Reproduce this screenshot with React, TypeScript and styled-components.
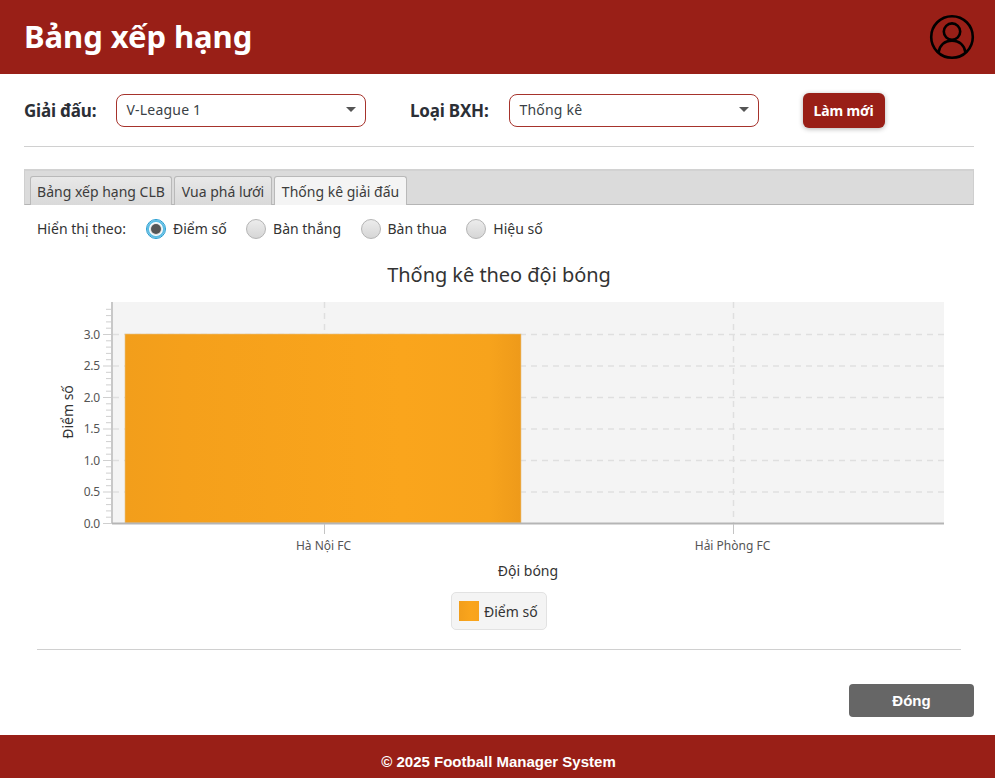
import React from 'react';
import styled, { createGlobalStyle } from 'styled-components';

const FONT = `"Noto Sans", "Open Sans", sans-serif`;

const GlobalStyle = createGlobalStyle`
  html, body {
    margin: 0;
    padding: 0;
    background: #ffffff;
    font-family: ${FONT};
  }
  * {
    box-sizing: border-box;
  }
`;

const Page = styled.div`
  width: 995px;
  height: 778px;
  display: flex;
  flex-direction: column;
  overflow: hidden;
`;

const Header = styled.header`
  height: 74px;
  flex: none;
  background: #991f17;
  display: flex;
  align-items: center;
  justify-content: space-between;
  padding: 0 20px 0 24px;
`;

const Title = styled.h1`
  margin: 0 0 2px;
  font-size: 31px;
  font-weight: 700;
  color: #ffffff;
  letter-spacing: -0.05px;
`;

const Main = styled.main`
  flex: 1;
  display: flex;
  flex-direction: column;
  padding: 19px 21px 18px 24px;
`;

const FilterRow = styled.div`
  display: flex;
  align-items: center;
  height: 35px;
`;

const FilterLabel = styled.label<{ $width: number }>`
  width: ${p => p.$width}px;
  font-size: 17px;
  font-weight: 700;
  color: #2b2f36;
  letter-spacing: -0.2px;
`;

const Select = styled.div`
  width: 250px;
  height: 33px;
  margin-right: 44px;
  padding: 0 9.5px 2px 9.5px;
  display: flex;
  align-items: center;
  justify-content: space-between;
  background: #ffffff;
  border: 1.5px solid #a6332c;
  border-radius: 8px;
  font-size: 14px;
  color: #3a3f46;
  letter-spacing: 0.2px;
`;

const Caret = styled.span`
  width: 0;
  height: 0;
  border-left: 5.5px solid transparent;
  border-right: 5.5px solid transparent;
  border-top: 5.5px solid #555555;
`;

const RefreshButton = styled.button`
  width: 82px;
  height: 35px;
  padding: 0 1px 0 0;
  border: none;
  border-radius: 6px;
  background: #991f17;
  color: #ffffff;
  font-family: ${FONT};
  font-size: 14px;
  font-weight: 700;
  letter-spacing: -0.1px;
  box-shadow: 0 1px 5px rgba(0, 0, 0, 0.3);
`;

const Rule = styled.hr<{ $top: number; $inset?: number }>`
  height: 1px;
  flex: none;
  border: none;
  background: #d0d0d0;
  margin: ${p => p.$top}px ${p => p.$inset ?? 0}px 0;
`;

const TabHeader = styled.div`
  margin-top: 22px;
  height: 36px;
  flex: none;
  display: flex;
  align-items: flex-end;
  gap: 2px;
  padding-left: 5px;
  background: #dbdbdb;
  border-top: 2px solid #d2d2d2;
  border-left: 1px solid #cfcfcf;
  border-right: 1px solid #cfcfcf;
  border-bottom: 1px solid #b5b5b5;
`;

const Tab = styled.div<{ $active?: boolean; $width: number }>`
  width: ${p => p.$width}px;
  height: 29px;
  margin-bottom: -1px;
  display: flex;
  align-items: center;
  justify-content: center;
  border: 1px solid #b9b9b9;
  border-bottom: none;
  border-radius: 3px 3px 0 0;
  background: ${p => (p.$active ? '#f4f4f4' : 'linear-gradient(#e8e8e8, #d9d9d9)')};
  font-size: 14px;
  color: #3c3c3c;
`;

const Pane = styled.section`
  flex: 1;
  display: flex;
  flex-direction: column;
  padding: 0 13px;
`;

const RadioRow = styled.div`
  height: 47px;
  flex: none;
  display: flex;
  align-items: center;
  font-size: 14px;
  color: #333333;
`;

const RadioCaption = styled.span`
  width: 109px;
`;

const RadioItem = styled.label`
  display: flex;
  align-items: center;
  gap: 7px;
  margin-right: 19.4px;
`;

const RadioDot = styled.span<{ $checked?: boolean }>`
  width: 20px;
  height: 20px;
  flex: none;
  display: flex;
  align-items: center;
  justify-content: center;
  border-radius: 50%;
  border: 1px solid #b4b4b4;
  background: linear-gradient(#ececec, #d6d6d6);
  ${p => p.$checked && 'border: 1px solid #1f9bd1; box-shadow: inset 0 0 0 2px #5cbde4, inset 0 0 0 3px #ffffff;'}

  &::after {
    content: '';
    width: 10px;
    height: 10px;
    border-radius: 50%;
    background: ${p => (p.$checked ? '#555555' : 'transparent')};
  }
`;

const ChartTitle = styled.h2`
  margin: 8px 0 0;
  height: 32px;
  font-size: 20px;
  line-height: 30px;
  font-weight: 400;
  text-align: center;
  color: #333333;
  letter-spacing: -0.05px;
`;

const ChartSvg = styled.svg`
  display: block;
  flex: none;
  margin-top: 3px;
`;

const Legend = styled.div`
  align-self: center;
  margin: 7px 0 0;
  width: 96px;
  height: 38px;
  flex: none;
  display: flex;
  align-items: center;
  gap: 5px;
  padding-left: 7px;
  background: #f4f4f4;
  border: 1px solid #e2e2e2;
  border-radius: 5px;
  font-size: 14px;
  color: #333333;
`;

const LegendSwatch = styled.span`
  width: 20px;
  height: 20px;
  flex: none;
  background: linear-gradient(90deg, #f29e1b, #faa51c 60%, #f8a31c);
`;

const ActionRow = styled.div`
  flex: 1;
  display: flex;
  align-items: flex-end;
  justify-content: flex-end;
  margin-right: -13px;
`;

const CloseButton = styled.button`
  width: 125px;
  height: 33px;
  padding: 0;
  border: none;
  border-radius: 4px;
  background: #666666;
  color: #ffffff;
  font-family: "Liberation Sans", Arial, sans-serif;
  font-size: 15px;
  font-weight: 700;
`;

const Footer = styled.footer`
  height: 43px;
  flex: none;
  display: flex;
  align-items: center;
  justify-content: center;
  padding: 10px 0 0 2px;
  background: #991f17;
  color: #ffffff;
  font-family: "Liberation Sans", Arial, sans-serif;
  font-size: 15px;
  font-weight: 700;
`;

const UserIcon = () => (
  <svg width="46" height="46" viewBox="0 0 46 46" fill="none" stroke="#000000" strokeWidth="2.6">
    <circle cx="23" cy="23" r="20.8" />
    <circle cx="23" cy="17.6" r="8.2" />
    <path d="M9.6 38.4 C10.4 31.4 15.6 26.6 23 26.6 C30.4 26.6 35.6 31.4 36.4 38.4" />
  </svg>
);

// chart origin inside the svg: page x - 37, page y - 295
const PLOT = { left: 76, right: 907, top: 7, bottom: 228 };
const UNIT = 63;
const MAJOR = [0, 0.5, 1, 1.5, 2, 2.5, 3];
const MINOR = Array.from({ length: 36 }, (_, i) => i * 0.1).filter(v => Math.round(v * 10) % 5 !== 0);
const CLUBS = [
  { name: 'Hà Nội FC', x: 287 },
  { name: 'Hải Phòng FC', x: 696 },
];

const yFor = (value: number) => PLOT.bottom - value * UNIT;

const Chart = () => (
  <ChartSvg width="924" height="290" viewBox="0 0 924 290" fontFamily={FONT}>
    <defs>
      <linearGradient id="bar" x1="0" x2="1" y1="0" y2="0">
        <stop offset="0" stopColor="#f29e1b" />
        <stop offset="0.15" stopColor="#f5a01b" />
        <stop offset="0.7" stopColor="#faa51c" />
        <stop offset="0.92" stopColor="#f7a31c" />
        <stop offset="1" stopColor="#ee9a1a" />
      </linearGradient>
    </defs>
    <rect x={PLOT.left} y={PLOT.top} width={PLOT.right - PLOT.left} height={PLOT.bottom - PLOT.top} fill="#f4f4f4" />
    {MAJOR.slice(1).map(v => (
      <line key={v} x1={PLOT.left} x2={PLOT.right} y1={yFor(v) + 0.5} y2={yFor(v) + 0.5} stroke="#dfdfdf" strokeWidth="1.5" strokeDasharray="6 5" />
    ))}
    {CLUBS.map(c => (
      <line key={c.name} x1={c.x + 0.5} x2={c.x + 0.5} y1={PLOT.top} y2={PLOT.bottom} stroke="#dfdfdf" strokeWidth="1.5" strokeDasharray="6 5" />
    ))}
    <rect x="88" y={yFor(3)} width="396" height={3 * UNIT} fill="url(#bar)" stroke="#e3c48c" strokeWidth="0.6" />
    {MINOR.map(v => (
      <line key={v} x1="69" x2="75" y1={yFor(v) + 0.5} y2={yFor(v) + 0.5} stroke="#cfcfcf" />
    ))}
    {MAJOR.map(v => (
      <g key={v}>
        <line x1="66" x2="75" y1={yFor(v) + 0.5} y2={yFor(v) + 0.5} stroke="#cfcfcf" />
        <text x="63" y={yFor(v) + 4.5} textAnchor="end" fontSize="12" letterSpacing="-0.2" fill="#555555">
          {v.toFixed(1)}
        </text>
      </g>
    ))}
    <line x1="75" x2="75" y1={PLOT.top} y2={PLOT.bottom} stroke="#c8c8c8" strokeWidth="2" />
    <line x1="75" x2={PLOT.right} y1={PLOT.bottom + 0.5} y2={PLOT.bottom + 0.5} stroke="#b5b5b5" strokeWidth="2" />
    {CLUBS.map(c => (
      <g key={c.name}>
        <line x1={c.x + 0.5} x2={c.x + 0.5} y1={PLOT.bottom + 1} y2={PLOT.bottom + 11} stroke="#c4c4c4" />
        <text x={c.x - 0.5} y="255" textAnchor="middle" fontSize="12" fill="#555555">
          {c.name}
        </text>
      </g>
    ))}
    <text x="491" y="281" textAnchor="middle" fontSize="14" fill="#333333">
      Đội bóng
    </text>
    <text transform="translate(36 117) rotate(-90)" textAnchor="middle" fontSize="14" fill="#333333">
      Điểm số
    </text>
  </ChartSvg>
);

const App: React.FC = () => {
  return (
    <Page>
      <GlobalStyle />
      <Header>
        <Title>Bảng xếp hạng</Title>
        <UserIcon />
      </Header>

      <Main>
        <FilterRow>
          <FilterLabel $width={92}>Giải đấu:</FilterLabel>
          <Select>
            V-League 1
            <Caret />
          </Select>
          <FilterLabel $width={99}>Loại BXH:</FilterLabel>
          <Select>
            Thống kê
            <Caret />
          </Select>
          <RefreshButton>Làm mới</RefreshButton>
        </FilterRow>

        <Rule $top={18} />

        <TabHeader>
          <Tab $width={142}>Bảng xếp hạng CLB</Tab>
          <Tab $width={98}>Vua phá lưới</Tab>
          <Tab $width={133} $active>
            Thống kê giải đấu
          </Tab>
        </TabHeader>

        <Pane>
          <RadioRow>
            <RadioCaption>Hiển thị theo:</RadioCaption>
            <RadioItem>
              <RadioDot $checked />
              Điểm số
            </RadioItem>
            <RadioItem>
              <RadioDot />
              Bàn thắng
            </RadioItem>
            <RadioItem>
              <RadioDot />
              Bàn thua
            </RadioItem>
            <RadioItem>
              <RadioDot />
              Hiệu số
            </RadioItem>
          </RadioRow>

          <ChartTitle>Thống kê theo đội bóng</ChartTitle>
          <Chart />

          <Legend>
            <LegendSwatch />
            Điểm số
          </Legend>

          <Rule $top={19} />

          <ActionRow>
            <CloseButton>Đóng</CloseButton>
          </ActionRow>
        </Pane>
      </Main>

      <Footer>© 2025 Football Manager System</Footer>
    </Page>
  );
};

export default App;
